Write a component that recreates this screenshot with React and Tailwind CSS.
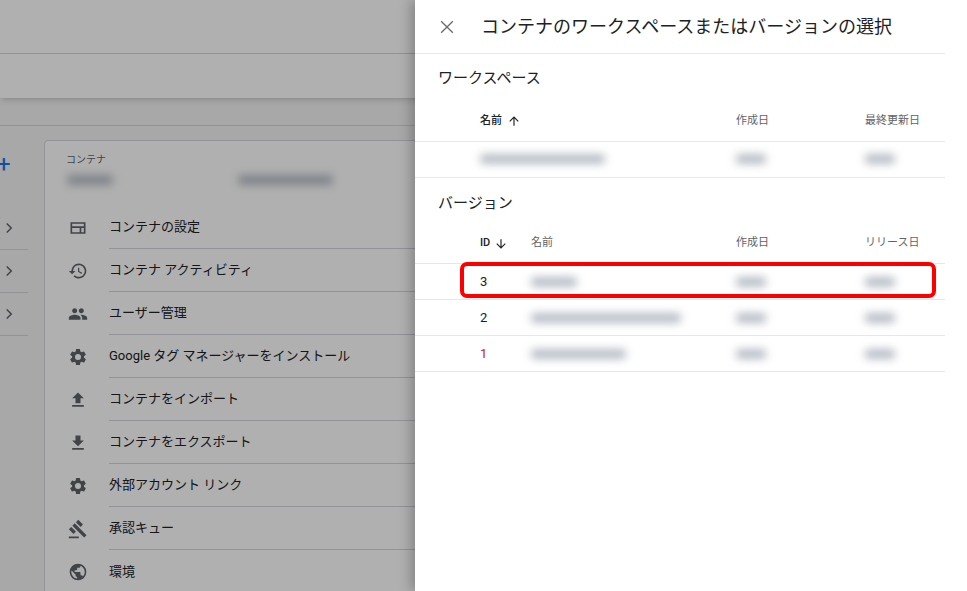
import React from "react";

const F = { fontFamily: '"Roboto","Noto Sans CJK JP",sans-serif' };

const I = {
  settings: <svg viewBox="0 0 24 24" className="w-5 h-5" fill="#5f6368"><path d="M3 5v14h18V5H3zm2 2h14v3H5V7zm0 5h9v5H5v-5zm11 0h3v5h-3v-5z"/></svg>,
  history: <svg viewBox="0 0 24 24" className="w-5 h-5" fill="#5f6368"><path d="M13 3a9 9 0 0 0-9 9H1l3.9 3.9L9 12H6a7 7 0 1 1 2.05 4.95l-1.42 1.42A9 9 0 1 0 13 3zm-1 5v5l4.25 2.52.77-1.28-3.52-2.09V8H12z"/></svg>,
  people: <svg viewBox="0 0 24 24" className="w-5 h-5" fill="#5f6368"><path d="M16 11c1.66 0 2.99-1.34 2.99-3S17.66 5 16 5s-3 1.34-3 3 1.34 3 3 3zm-8 0c1.66 0 2.99-1.34 2.99-3S9.66 5 8 5 5 6.34 5 8s1.34 3 3 3zm0 2c-2.33 0-7 1.17-7 3.5V19h14v-2.5C15 14.170 10.33 13 8 13zm8 0c-.29 0-.62.02-.97.05 1.16.84 1.970 1.97 1.97 3.45V19h6v-2.5c0-2.33-4.67-3.5-7-3.5z"/></svg>,
  gear: <svg viewBox="0 0 24 24" className="w-5 h-5" fill="#5f6368"><path d="M19.14 12.94a7.5 7.5 0 0 0 .06-.94 7.5 7.5 0 0 0-.07-.94l2.03-1.58a.49.49 0 0 0 .12-.61l-1.92-3.32a.49.49 0 0 0-.59-.22l-2.39.96a7 7 0 0 0-1.62-.94l-.36-2.54a.48.48 0 0 0-.48-.41h-3.840a.48.48 0 0 0-.47.41l-.36 2.54a7.3 7.3 0 0 0-1.62.94l-2.39-.96a.48.48 0 0 0-.59.22L2.74 8.87a.47.47 0 0 0 .12.61l2.03 1.58a7.6 7.6 0 0 0 0 1.88l-2.03 1.58a.49.49 0 0 0-.12.61l1.92 3.32c.12.22.37.29.59.22l2.39-.96c.5.38 1.03.7 1.62.94l.36 2.54c.05.24.24.41.48.41h3.84c.24 0 .44-.17.47-.41l.36-2.54a7 7 0 0 0 1.62-.94l2.39.96c.22.08.47 0 .59-.22l1.92-3.32a.47.47 0 0 0-.12-.61l-2.01-1.58zM12 15.6A3.6 3.6 0 1 1 12 8.4a3.6 3.6 0 0 1 0 7.2z"/></svg>,
  up: <svg viewBox="0 0 24 24" className="w-5 h-5" fill="#5f6368"><path d="M9 16h6v-6h4l-7-7-7 7h4zm-4 2h14v2H5z"/></svg>,
  down: <svg viewBox="0 0 24 24" className="w-5 h-5" fill="#5f6368"><path d="M19 9h-4V3H9v6H5l7 7 7-7zM5 18v2h14v-2H5z"/></svg>,
  gavel: <svg viewBox="0 0 24 24" className="w-5 h-5" fill="#5f6368"><path d="M1 21h12v2H1zM5.25 8.07l2.83-2.83 14.14 14.14-2.83 2.83zM12.32 1l5.66 5.66-2.83 2.83-5.66-5.66zM3.83 9.48l5.66 5.66-2.83 2.83L1 12.31z"/></svg>,
  globe: <svg viewBox="0 0 24 24" className="w-5 h-5" fill="#5f6368"><path d="M12 2a10 10 0 1 0 0 20 10 10 0 0 0 0-20zm-1 17.93A8 8 0 0 1 4 12c0-.62.08-1.21.21-1.79L9 15v1a2 2 0 0 0 2 2v1.93zm6.9-2.54A2 2 0 0 0 16 16h-1v-3a1 1 0 0 0-1-1H8v-2h2a1 1 0 0 0 1-1V7h2a2 2 0 0 0 2-2v-.41a7.98 7.98 0 0 1 2.9 12.8z"/></svg>,
};

const menu = [
  ["settings", "コンテナの設定"],
  ["history", "コンテナ アクティビティ"],
  ["people", "ユーザー管理"],
  ["gear", "Google タグ マネージャーをインストール"],
  ["up", "コンテナをインポート"],
  ["down", "コンテナをエクスポート"],
  ["gear", "外部アカウント リンク"],
  ["gavel", "承認キュー"],
  ["globe", "環境"],
];

const Blur = ({ w }) => <div className="h-[10px] rounded bg-gray-400/70 blur-[4px]" style={{ width: w }} />;

const Arrow = ({ up }) => (
  <svg viewBox="0 0 24 24" className="w-[14px] h-[14px]" fill="#202124">
    <path d={up ? "M4 12l1.41 1.41L11 7.83V20h2V7.83l5.58 5.59L20 12l-8-8z" : "M20 12l-1.41-1.41L13 16.17V4h-2v12.17l-5.58-5.59L4 12l8 8z"} />
  </svg>
);

const Chev = () => (
  <div className="h-[43px] flex items-center border-b border-gray-300">
    <svg viewBox="0 0 24 24" className="w-[18px] h-[18px]" fill="none" stroke="#5f6368" strokeWidth="2"><path d="M9 6l6 6-6 6"/></svg>
  </div>
);

export default function App() {
  return (
    <div className="relative w-[967px] h-[591px] overflow-hidden bg-[#f3f3f3]" style={F}>
      <div className="h-[54px] bg-white border-b border-gray-300" />
      <div className="h-[44px] bg-white shadow-md" />
      <div className="h-[28px] border-b border-gray-300" />
      <div className="flex">
        <div className="w-[28px] pt-[26px]">
          <div className="text-[#1a73e8] text-[24px] leading-none -ml-[3px]">+</div>
          <div className="mt-[31px]"><Chev /><Chev /><Chev /></div>
        </div>
        <div className="ml-[16px] mt-[14px] w-[600px] bg-white border border-gray-300 rounded-t">
          <div className="pl-[21px] pt-[11px] text-[10px] text-[#5f6368]">コンテナ</div>
          <div className="pl-[22px] pt-[8px] flex justify-between pr-[10px]"><Blur w={46} /><div className="mr-[300px]"><Blur w={95} /></div></div>
          <div className="mt-[21px]">
            {menu.map(([ic, t], i) => (
              <div key={i} className="flex items-center h-[43px]">
                <div className="w-[64px] flex justify-center pl-[1px]">{I[ic]}</div>
                <div className={`flex-1 h-full flex items-center text-[13px] text-[#202124] ${i < 8 ? "border-b border-gray-300" : ""}`}>{t}</div>
              </div>
            ))}
          </div>
        </div>
      </div>
      <div className="absolute inset-0 bg-black/[0.31]" />
      <div className="absolute top-0 right-0 w-[552px] h-full bg-white shadow-[-4px_0_12px_rgba(0,0,0,0.25)] text-[#202124]">
        <div className="w-[530px]">
          <div className="h-[54px] flex items-center border-b border-gray-200">
            <svg viewBox="0 0 24 24" className="w-5 h-5 ml-[22px]" stroke="#6b6b6b" strokeWidth="1.6" fill="none"><path d="M5 5l14 14M19 5L5 19"/></svg>
            <div className="ml-[24px] text-[18px]">コンテナのワークスペースまたはバージョンの選択</div>
          </div>
          <div className="pl-[23px] pt-[13px] text-[15px]">ワークスペース</div>
          <div className="h-[40px] mt-[12px] flex items-center text-[11px] text-[#5f6368] border-b border-gray-200">
            <div className="w-[321px] pl-[65px] text-[#202124] font-medium flex items-center gap-[5px]">名前 <Arrow up /></div>
            <div className="w-[129px]">作成日</div>
            <div>最終更新日</div>
          </div>
          <div className="h-[36px] flex items-center border-b border-gray-200">
            <div className="w-[321px] pl-[65px]"><Blur w={125} /></div>
            <div className="w-[129px]"><Blur w={30} /></div>
            <Blur w={30} />
          </div>
          <div className="pl-[23px] pt-[14px] text-[15px]">バージョン</div>
          <div className="h-[40px] mt-[10px] flex items-center text-[11px] text-[#5f6368] border-b border-gray-200">
            <div className="w-[116px] pl-[65px] text-[#202124] font-medium flex items-center gap-[4px]">ID <Arrow /></div>
            <div className="w-[205px]">名前</div>
            <div className="w-[129px]">作成日</div>
            <div>リリース日</div>
          </div>
          {[["3", 46, "#202124"], ["2", 150, "#202124"], ["1", 95, "#c5221f"]].map(([id, w, c], i) => (
            <div key={i} className="h-[36px] flex items-center border-b border-gray-200 text-[13px]">
              <div className="w-[116px] pl-[65px]" style={{ color: c }}>{id}</div>
              <div className="w-[205px]"><Blur w={w} /></div>
              <div className="w-[129px]"><Blur w={30} /></div>
              <Blur w={30} />
            </div>
          ))}
        </div>
        <div className="absolute left-[45px] top-[262px] w-[476px] h-[36px] border-[4px] border-[#f00] rounded-[7px]" />
      </div>
    </div>
  );
}
